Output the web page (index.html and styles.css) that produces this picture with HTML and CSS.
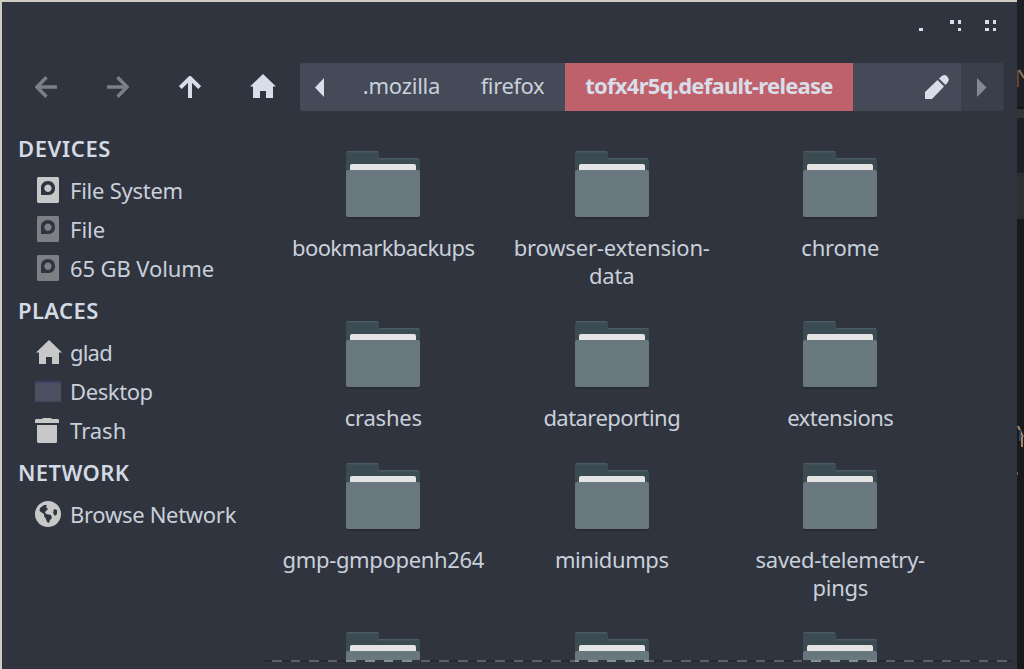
FILE: index.html
```html
<!DOCTYPE html>
<html lang="en">
<head>
<meta charset="utf-8">
<title>tofx4r5q.default-release</title>
<link rel="stylesheet" href="styles.css">
</head>
<body>
<svg class="defs" aria-hidden="true">
  <symbol id="folder" viewBox="0 0 74 68">
    <path d="M0 65V2Q0 0 2 0H31Q33 0 33 2V7H72Q74 7 74 9V65z" fill="#3b4b52"/>
    <path d="M1 .8H32M33 7.8H73" stroke="#4b5b63" stroke-width="1.6"/>
    <path d="M4 20V15Q4 13 6 13H68Q70 13 70 15V20z" fill="#e4e4e4"/>
    <path d="M1 66H73V67Q73 68 71 68H3Q1 68 1 67z" fill="#272b35"/>
    <path d="M0 21Q0 19 2 19H72Q74 19 74 21V64Q74 66 72 66H2Q0 66 0 64z" fill="#69777e"/>
  </symbol>
  <symbol id="home" viewBox="0 0 26 25">
    <path d="M13 0L26 12.6H23V24H16V17H10V24H3V12.6H0z" fill="currentColor"/>
  </symbol>
  <symbol id="drive" viewBox="0 0 22 26">
    <path fill-rule="evenodd" d="M1 0H21L22 1V25L21 26H1L0 25V1zM4 18H11.5C16 18 18 15 18 11.300C18 7 15.500 4 11 4C6.500 4 4 7 4 11zM11 7.500A3.700 3.700 0 1 1 10.900 7.500z" fill="currentColor"/>
  </symbol>
</svg>
<div class="window">
  <header class="titlebar">
    <svg width="78" height="12" viewBox="0 0 78 12" fill="#d8dee9"><path d="M0 8h4v3h-4zM31 0h4v4h-4zM39 0h3v4h-3zM39 8h3v3h-3zM66 0h4v4h-4zM74 0h3v4h-3zM66 8h4v3h-4zM74 8h3v3h-3z"/></svg>
  </header>
  <nav class="toolbar">
    <div class="nav-buttons">
      <svg class="dim" width="22" height="22" viewBox="0 0 22 22"><path d="M22 11H2M11.500 1.300L2 11L11.500 20.700"/></svg>
      <svg class="dim" width="22" height="22" viewBox="0 0 22 22"><path d="M0 11H20M10.500 1.300L20 11L10.500 20.700"/></svg>
      <svg class="up" width="22" height="22" viewBox="0 0 22 22"><path d="M11 22V2M1.300 11.500L11 2L20.700 11.500"/></svg>
      <svg class="home" width="26" height="25"><use href="#home"/></svg>
    </div>
    <div class="pathbar">
      <div class="seg prev"><svg width="10" height="19" viewBox="0 0 10 19"><path d="M9 0V19L0 9.500z" fill="#d8dee9"/></svg></div>
      <div class="seg mozilla"><span>.mozilla</span></div>
      <div class="seg firefox"><span>firefox</span></div>
      <div class="seg active"><span>tofx4r5q.default-release</span></div>
      <div class="seg edit"><svg width="24" height="24" viewBox="0 0 24 24" fill="#d8dee9"><path d="M0 24V17L12.500 5L19 11.500L7 24z"/><path d="M14 3.500L17 .8Q20 -1 22 1.300L23 2.400Q24.500 4.500 23 7L20.500 10z"/></svg></div>
      <div class="seg next"><svg width="10" height="19" viewBox="0 0 10 19"><path d="M0 0V19L9.500 9.500z" fill="#838892"/></svg></div>
    </div>
  </nav>
  <div class="body">
    <aside class="sidebar">
      <h2 class="h-dev">DEVICES</h2>
      <div class="row"><i><svg width="22" height="26"><use href="#drive"/></svg></i><span class="s1">File System</span></div>
      <div class="row faded"><i><svg width="22" height="26"><use href="#drive"/></svg></i><span class="s2">File</span></div>
      <div class="row faded"><i><svg width="22" height="26"><use href="#drive"/></svg></i><span class="s3">65 GB Volume</span></div>
      <h2 class="h-pla">PLACES</h2>
      <div class="row"><i class="shift-right"><svg width="26" height="25"><use href="#home"/></svg></i><span class="s4">glad</span></div>
      <div class="row"><i><svg width="26" height="21" viewBox="0 0 26 21"><path d="M0 0H26V21H0z" fill="#4b5162"/><path d="M0 0H26V2H0z" fill="#403d66"/><path d="M0 19.500H26V21H0z" fill="#434858"/></svg></i><span class="s5">Desktop</span></div>
      <div class="row"><i class="shift-left"><svg width="24" height="25" viewBox="0 0 24 25"><path d="M0 5V2L1 1H7L8 0H16L17 1H23L24 2V5zM2 7H22V24L21 25H3L2 24z" fill="currentColor"/></svg></i><span class="s6">Trash</span></div>
      <h2 class="h-net">NETWORK</h2>
      <div class="row"><i><svg width="26" height="26" viewBox="0 0 26 26"><circle cx="13" cy="13" r="13" fill="currentColor"/><path d="M9 4L12 4L11 6L13 8L10 11L11 13L16 14L17 17L15 19L14 22L12 21L11 18L9 15L9 13L4.500 10L5 7zM19 8L22 9V13L20 15L18 12z" fill="#30343f"/></svg></i><span class="s7">Browse Network</span></div>
    </aside>
    <main class="files">
      <div class="file"><svg><use href="#folder"/></svg><span class="f1">bookmarkbackups</span></div>
      <div class="file"><svg><use href="#folder"/></svg><span class="f2">browser-extension-<br>data</span></div>
      <div class="file"><svg><use href="#folder"/></svg><span class="f3">chrome</span></div>
      <div class="file"><svg><use href="#folder"/></svg><span class="f4">crashes</span></div>
      <div class="file"><svg><use href="#folder"/></svg><span class="f5">datareporting</span></div>
      <div class="file"><svg><use href="#folder"/></svg><span class="f6">extensions</span></div>
      <div class="file"><svg><use href="#folder"/></svg><span class="f7">gmp-gmpopenh264</span></div>
      <div class="file"><svg><use href="#folder"/></svg><span class="f8">minidumps</span></div>
      <div class="file"><svg><use href="#folder"/></svg><span class="f9">saved-telemetry-<br>pings</span></div>
      <div class="file"><svg><use href="#folder"/></svg></div>
      <div class="file"><svg><use href="#folder"/></svg></div>
      <div class="file"><svg><use href="#folder"/></svg></div>
    </main>
  </div>
  <div class="undershoot"></div>
</div>
<div class="behind">
  <div class="b1"></div><div class="b2"></div><div class="b3"></div><div class="b4"></div><div class="b5"></div>
  <svg class="scraps" width="7" height="669" viewBox="0 0 7 669"><path d="M1 70V87" stroke="#65422f" stroke-width="2"/><path d="M2 70L7 78" stroke="#8b725c" stroke-width="2"/><path d="M1 426L6 437M5 437V447" stroke="#a58763" stroke-width="2" fill="none"/><path d="M3 430V441" stroke="#21436c" stroke-width="2"/><path d="M0 472H1V475H0z" fill="#806040"/></svg>
</div>
</body>
</html>
```
FILE: styles.css
```css
* { box-sizing: border-box; }
body {
  margin: 0;
  width: 1024px;
  height: 669px;
  overflow: hidden;
  display: flex;
  background: #18191b;
  color: #c9d0da;
  font: 22px/28px "Noto Sans", sans-serif;
}
svg { display: block; flex: none; }
.defs { position: absolute; width: 0; height: 0; }
.window {
  position: relative;
  width: 1017px;
  height: 669px;
  background: #30343f;
  border-top: 2px solid #d0cbc3;
  border-left: 2px solid #d0cbc3;
  overflow: hidden;
}
.titlebar {
  height: 61px;
  display: flex;
  justify-content: flex-end;
  padding: 18px 20px 0 0;
}
.toolbar { display: flex; height: 48px; }
.nav-buttons {
  width: 298px;
  display: flex;
  align-items: flex-start;
  padding: 13px 0 0 33px;
  gap: 50px;
  color: #d8dee9;
}
.nav-buttons path { fill: none; stroke: #d8dee9; stroke-width: 4; }
.nav-buttons .dim path { stroke: #7b7f8a; stroke-width: 3.4; }
.nav-buttons .home { margin: -2px 0 0 -1px; }
.pathbar {
  display: flex;
  width: 704px;
  border-radius: 3px;
  overflow: hidden;
  background: #454a58;
}
.seg { display: flex; align-items: center; justify-content: center; white-space: nowrap; }
.seg span { padding-bottom: 4px; }
.prev { width: 40px; }
.mozilla { width: 123px; letter-spacing: -0.25px; }
.firefox { width: 102px; padding-right: 3px; letter-spacing: -0.4px; }
.active { width: 288px; background: #bf616a; font-weight: 700; color: #d8dee9; letter-spacing: -0.75px; }
.edit { width: 108px; justify-content: flex-end; padding-right: 12px; }
.next { width: 43px; background: #3a3f4b; border-right: 1px solid #353944; }
.body { display: flex; height: 551px; overflow: hidden; }
.sidebar { width: 267px; padding: 16px 0 0 17px; color: #c8c8c8; white-space: nowrap; }
.sidebar h2 {
  margin: 0 0 0 -1px;
  height: 45px;
  font-size: 22px;
  line-height: 43px;
  font-weight: 600;
  color: #d3dae3;
}
.h-dev { letter-spacing: 0.6px; }
.h-pla { letter-spacing: 0.4px; }
.h-net { letter-spacing: 0.4px; }
.row { display: flex; align-items: center; height: 39px; }
.row i { width: 26px; margin: -3px 9px 0 16px; display: flex; justify-content: center; }
.row .shift-right { margin-left: 17px; margin-right: 8px; }
.row .shift-left { margin-left: 15px; margin-right: 10px; }
.row span { color: #c9d0da; padding-bottom: 4px; }
.faded { color: #7e7f85; }
.s1 { letter-spacing: -0.25px; }
.s3 { letter-spacing: -0.1px; }
.s4 { letter-spacing: -0.8px; }
.s5 { letter-spacing: -0.4px; }
.s7 { letter-spacing: -0.3px; }
.files {
  width: 686px;
  height: 551px;
  display: grid;
  grid-template-columns: repeat(3, 228.500px);
  grid-template-rows: 170px 142px 169px 31px;
  padding-top: 40px;
  overflow: hidden;
}
.file { display: flex; flex-direction: column; align-items: center; text-align: center; }
.file svg { width: 74px; height: 68px; }
.file span { margin-top: 14px; white-space: nowrap; }
.file:nth-last-child(-n+3) { height: 31px; overflow: hidden; }
.f1 { letter-spacing: -0.6px; }
.f2 { letter-spacing: -0.18px; }
.f3 { letter-spacing: -0.2px; }
.f4 { letter-spacing: -0.2px; }
.f5 { letter-spacing: -0.55px; }
.f6 { letter-spacing: -0.5px; }
.f7 { letter-spacing: -0.35px; }
.f8 { letter-spacing: -0.4px; }
.f9 { letter-spacing: -0.28px; }
.undershoot {
  position: absolute;
  left: 261px;
  right: 4px;
  top: 658px;
  height: 2px;
  background: repeating-linear-gradient(90deg, rgba(35,39,49,.8) 0 9px, rgba(190,200,210,.3) 9px 18.600px);
}
.behind { position: relative; width: 7px; background: #18191b; }
.b1 { height: 107px; background: #1e2025; }
.b2 { height: 11px; background: #333438; border-top: 2px solid #141517; }
.b3 { height: 55px; background: #1e2025; }
.b4 { height: 46px; background: #2e2f32; }
.b5 { height: 450px; background: #18191b; }
.scraps { position: absolute; left: 0; top: 0; }
```
